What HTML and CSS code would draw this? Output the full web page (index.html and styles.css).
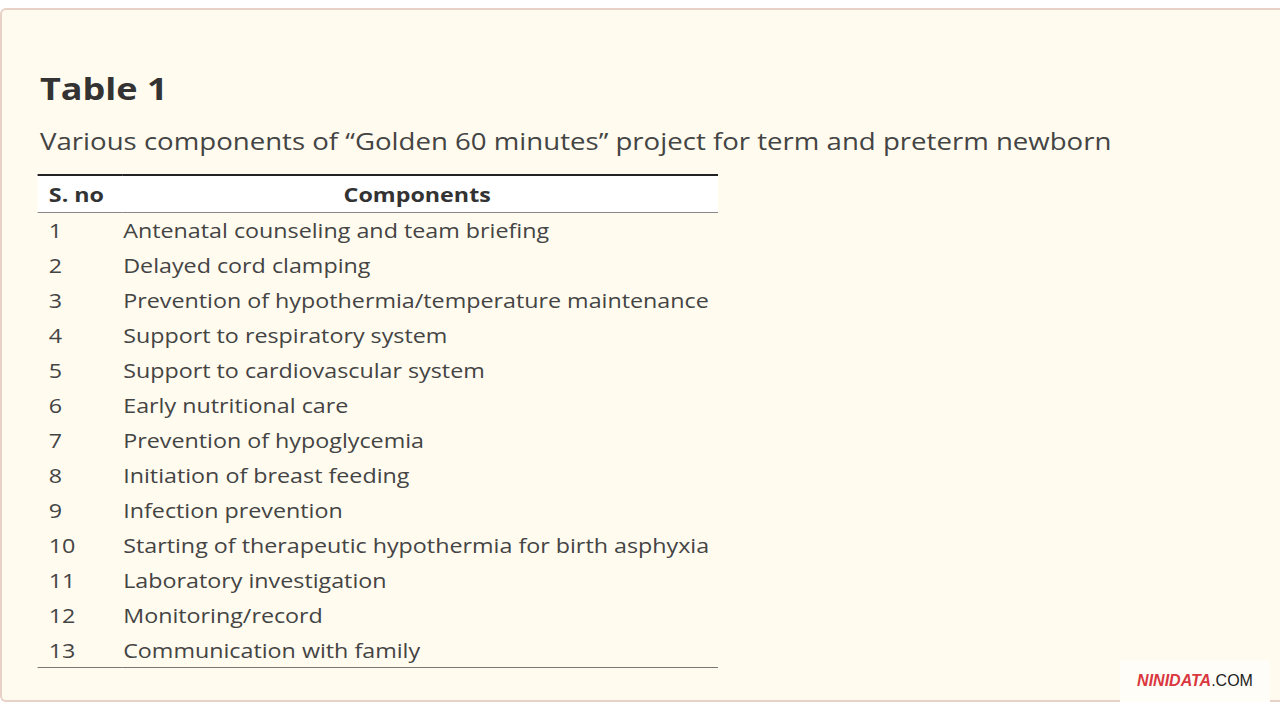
FILE: index.html
```html
<!DOCTYPE html>
<html lang="en">
<head>
<meta charset="utf-8">
<title>Table 1</title>
<link rel="stylesheet" href="styles.css">
</head>
<body>
<div class="card">
  <div class="content">
    <h2 class="title">Table 1</h2>
    <p class="caption">Various components of “Golden 60 minutes” project for term and preterm newborn</p>
    <table class="data">
      <thead>
        <tr><th class="c-no">S. no</th><th class="c-comp">Components</th></tr>
      </thead>
      <tbody>
        <tr><td>1</td><td>Antenatal counseling and team briefing</td></tr>
        <tr><td>2</td><td>Delayed cord clamping</td></tr>
        <tr><td>3</td><td>Prevention of hypothermia/temperature maintenance</td></tr>
        <tr><td>4</td><td>Support to respiratory system</td></tr>
        <tr><td>5</td><td>Support to cardiovascular system</td></tr>
        <tr><td>6</td><td>Early nutritional care</td></tr>
        <tr><td>7</td><td>Prevention of hypoglycemia</td></tr>
        <tr><td>8</td><td>Initiation of breast feeding</td></tr>
        <tr><td>9</td><td>Infection prevention</td></tr>
        <tr><td>10</td><td>Starting of therapeutic hypothermia for birth asphyxia</td></tr>
        <tr><td>11</td><td>Laboratory investigation</td></tr>
        <tr><td>12</td><td>Monitoring/record</td></tr>
        <tr><td>13</td><td>Communication with family</td></tr>
      </tbody>
    </table>
  </div>
</div>
<div class="watermark"><span class="wm-red">NINIDATA</span><span class="wm-dark">.COM</span></div>
</body>
</html>
```
FILE: styles.css
```css
html, body {
  margin: 0;
  padding: 0;
  background: #ffffff;
  overflow: hidden;
}
body {
  width: 1280px;
  height: 720px;
  font-family: "Open Sans", "Liberation Sans", sans-serif;
  color: #444;
}
.card {
  margin: 8px 0 0 0;
  width: 1280px;
  height: 694px;
  box-sizing: border-box;
  background: #fffbef;
  border: 2px solid #e8d1c6;
  border-right: none;
  border-radius: 6px 0 0 6px;
  padding: 59px 0 0 38px;
  overflow: hidden;
}
.content {
  transform: scaleX(1.2);
  transform-origin: 0 0;
}
.title {
  margin: 0;
  font-size: 30px;
  font-weight: 700;
  color: #333;
  line-height: 40px;
}
.caption {
  margin: 16px 0 0 0;
  font-size: 23px;
  line-height: 32px;
  color: #444;
}
.data {
  margin: 17px 0 0 -1.67px;
  width: 567px;
  border-collapse: collapse;
  font-size: 19.4px;
  color: #444;
}
.data thead tr {
  background: #ffffff;
  border-top: 2px solid #222;
  border-bottom: 1px solid #888;
}
.data th {
  height: 36px;
  padding: 0;
  font-weight: 700;
  color: #333;
}
.data th.c-no {
  text-align: left;
  padding-left: 9px;
  width: 62px;
}
.data th.c-comp {
  text-align: center;
  padding-right: 6px;
}
.data tbody tr {
  height: 35px;
}
.data td {
  padding: 1px 0 0 9px;
  white-space: nowrap;
}
.data td + td {
  padding-left: 0;
}
.data tbody tr:last-child {
  border-bottom: 1px solid #777;
}
.watermark {
  position: absolute;
  left: 1120px;
  top: 660px;
  width: 150px;
  height: 42px;
  background: #fffdf8;
  display: flex;
  align-items: center;
  justify-content: center;
  font-family: "Liberation Sans", Arial, sans-serif;
  font-size: 16px;
  font-weight: 700;
}
.wm-red {
  color: #d9383f;
  font-style: italic;
}
.wm-dark {
  color: #222;
  font-weight: 400;
}
```
